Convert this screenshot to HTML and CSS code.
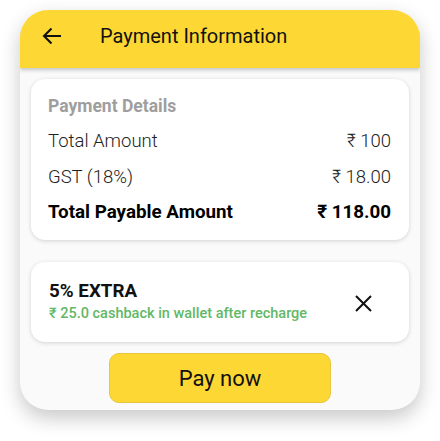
FILE: index.html
```html
<!DOCTYPE html>
<html>
<head>
<meta charset="utf-8">
<link rel="stylesheet" href="styles.css">
</head>
<body>
<div class="sheet">
  <header class="bar">
    <svg class="back" width="20" height="18" viewBox="0 0 20 18"><path d="M19 9H2.5M9.5 1.5L2 9l7.5 7.5" fill="none" stroke="#111" stroke-width="2.1"/></svg>
    <span class="title">Payment Information</span>
  </header>
  <main class="body">
    <section class="card details">
      <div class="heading">Payment Details</div>
      <div class="row"><span>Total Amount</span><span>₹ 100</span></div>
      <div class="row"><span>GST (18%)</span><span>₹ 18.00</span></div>
      <div class="row total"><span>Total Payable Amount</span><span>₹ 118.00</span></div>
    </section>
    <section class="card offer">
      <div class="offer-text">
        <div class="offer-title">5% EXTRA</div>
        <div class="offer-sub">₹ 25.0 cashback in wallet after recharge</div>
      </div>
      <svg class="close" width="17" height="17" viewBox="0 0 17 17"><path d="M1 1l15 15M16 1L1 16" fill="none" stroke="#111" stroke-width="2"/></svg>
    </section>
    <div class="actions"><button class="pay">Pay now</button></div>
  </main>
</div>
</body>
</html>
```
FILE: styles.css
```css
* { box-sizing: border-box; }
html, body { margin: 0; padding: 0; background: #fff; }
body { font-family: Roboto, "Noto Sans", sans-serif; width: 440px; height: 441px; padding: 10px 20px 0; }
.sheet {
  width: 400px;
  height: 400px;
  border-radius: 28px;
  background: #fafafa;
  box-shadow: 0 8px 20px rgba(0,0,0,0.22);
  overflow: hidden;
  display: flex;
  flex-direction: column;
}
.bar {
  height: 58px;
  background: #fdd835;
  display: flex;
  align-items: center;
  padding-left: 22px;
  padding-bottom: 6px;
  box-shadow: 0 2px 4px rgba(0,0,0,0.22);
  position: relative;
  z-index: 1;
  flex-shrink: 0;
}
.back { margin-right: 38px; }
.title { font-size: 20px; color: #111; }
.body {
  padding: 11px 11px 0;
  display: flex;
  flex-direction: column;
}
.card {
  background: #fff;
  border-radius: 14px;
  box-shadow: 0 1px 4px rgba(0,0,0,0.16);
}
.details { padding: 16px 18px 12px 17px; height: 161px; }
.heading { font-size: 17.5px; font-weight: 700; color: #9e9e9e; line-height: 22px; }
.row {
  display: flex;
  justify-content: space-between;
  font-size: 18.5px;
  font-weight: 300;
  color: #222;
  line-height: 22px;
  margin-top: 13px;
}
.row + .row { margin-top: 13.5px; }
.row.total { font-size: 18.8px; font-weight: 700; color: #000; }
.offer {
  margin-top: 22px;
  height: 80px;
  display: flex;
  align-items: center;
  justify-content: space-between;
  padding: 0 37px 0 18px;
}
.offer-text { margin-top: -1px; }
.offer-title { font-size: 18.8px; font-weight: 700; color: #111; line-height: 22px; }
.offer-sub { font-size: 14.5px; font-weight: 500; color: #62b865; line-height: 18px; margin-top: 3px; }
.close { margin-top: 2px; }
.actions { display: flex; justify-content: center; margin-top: 11px; }
.pay {
  width: 222px;
  height: 50px;
  background: #fdd835;
  border: 1px solid #e8c53a;
  border-radius: 10px;
  font-family: Roboto, sans-serif;
  font-size: 22px;
  color: #111;
  padding: 0;
}
```
